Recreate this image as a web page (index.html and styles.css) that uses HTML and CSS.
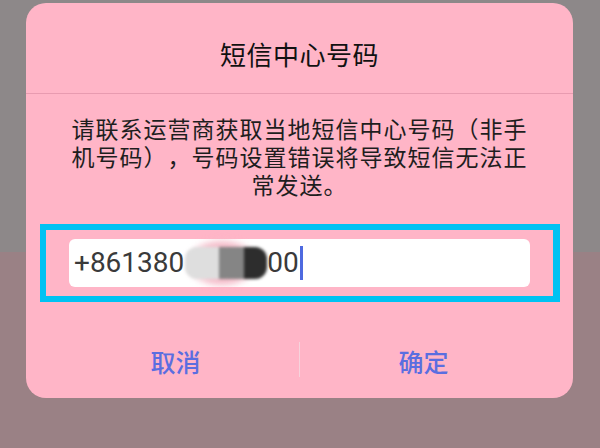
FILE: index.html
```html
<!DOCTYPE html>
<html lang="zh-CN">
<head>
<meta charset="utf-8">
<title>短信中心号码</title>
<link rel="stylesheet" href="styles.css">
</head>
<body>
<div class="screen">
  <div class="dialog">
    <div class="dialog-header">
      <h1 class="dialog-title">短信中心号码</h1>
    </div>
    <p class="dialog-message">请联系运营商获取当地短信中心号码（非手机号码），号码设置错误将导致短信无法正常发送。</p>
    <div class="highlight">
      <div class="field">
        <span class="field-text">+861380</span>
        <span class="mask">
          <span class="mask-halo"></span>
          <span class="mask-light"></span>
          <span class="mask-mid"></span>
          <span class="mask-dark"></span>
        </span>
        <span class="field-text">00</span>
        <span class="cursor"></span>
      </div>
    </div>
    <div class="actions">
      <button class="action">取消</button>
      <span class="action-divider"></span>
      <button class="action">确定</button>
    </div>
  </div>
</div>
</body>
</html>
```

FILE: styles.css
```css
* {
  box-sizing: border-box;
}

html, body {
  margin: 0;
  padding: 0;
}

body {
  width: 600px;
  height: 448px;
  overflow: hidden;
  background: linear-gradient(to bottom, #8d8889 0, #8d8889 252px, #9a8185 252px, #9a8185 100%);
  font-family: "Noto Sans CJK SC", "Noto Sans", sans-serif;
}

.screen {
  padding: 3px 27px 0 26px;
}

.dialog {
  width: 547px;
  height: 395px;
  background: #ffb5c7;
  border-radius: 20px;
  display: flex;
  flex-direction: column;
  align-items: center;
}

.dialog-header {
  width: 100%;
  padding-top: 32px;
  height: 91px;
  border-bottom: 1px solid #e89bb0;
  display: flex;
  justify-content: center;
}

.dialog-title {
  margin: 0;
  font-size: 26px;
  line-height: 38px;
  font-weight: 400;
  color: #111111;
  letter-spacing: 0.5px;
}

.dialog-message {
  margin: 20px 0 0;
  width: 462px;
  font-size: 23px;
  line-height: 28px;
  letter-spacing: 1px;
  color: #1e1e1e;
  text-align: center;
  text-spacing-trim: space-all;
}

.highlight {
  margin-top: 26px;
  width: 520px;
  height: 78px;
  border: 6px solid #00c2f2;
  border-right-width: 7px;
  padding: 9px 23px 0 23px;
  margin-left: 1px;
}

.field {
  width: 461px;
  height: 48px;
  background: #ffffff;
  border-radius: 6px;
  display: flex;
  align-items: center;
  padding-left: 5px;
  font-family: Roboto, "Noto Sans", sans-serif;
  font-size: 28px;
  color: #3a3a3a;
}

.field-text {
  line-height: 48px;
}

.mask {
  position: relative;
  display: flex;
  width: 82px;
  height: 32px;
  margin-left: 1px;
  filter: blur(1.5px);
}

.mask-halo {
  position: absolute;
  left: 4px;
  right: 12px;
  top: -6px;
  bottom: -6px;
  background: #f4b9c7;
  border-radius: 50%;
  filter: blur(3px);
}

.mask-light {
  position: relative;
  width: 34px;
  background: #dedede;
  border-radius: 12px 0 0 12px;
}

.mask-mid {
  position: relative;
  width: 25px;
  background: #858585;
}

.mask-dark {
  position: relative;
  width: 23px;
  background: #2d2d2d;
  border-radius: 0 12px 12px 0;
}

.cursor {
  width: 3px;
  height: 34px;
  background: #4e6ae0;
  margin-left: 1px;
}

.actions {
  margin-top: 24px;
  width: 100%;
  height: 70px;
  padding: 0 26px;
  display: flex;
  align-items: center;
}

.action {
  flex: 1;
  height: 70px;
  background: transparent;
  border: 0;
  padding: 0;
  font-family: "Noto Sans CJK SC", "Noto Sans", sans-serif;
  font-size: 25px;
  font-weight: 500;
  color: #5a6ee0;
}

.action-divider {
  width: 1px;
  height: 35px;
  background: #f6d3dc;
  margin-top: -3px;
}
```
